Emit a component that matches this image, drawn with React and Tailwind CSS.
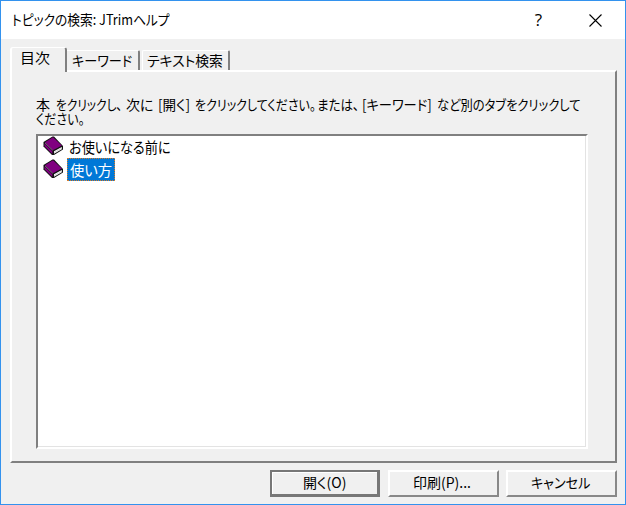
import React, { useLayoutEffect, useRef } from 'react';

// Condenses a run of text to the narrow width of a UI gothic face
const Narrow = ({ width, className = '', children }) => {
  const ref = useRef(null);

  useLayoutEffect(() => {
    const el = ref.current;
    const fit = () => {
      el.style.transform = `scaleX(${width / el.offsetWidth})`;
    };
    fit();
    document.fonts.ready.then(fit);
  }, [width]);

  return (
    <span className={`inline-block shrink-0 whitespace-nowrap ${className}`} style={{ width }}>
      <span ref={ref} className="inline-block origin-left [font-feature-settings:'palt']">
        {children}
      </span>
    </span>
  );
};

const BookIcon = () => (
  <svg width="21" height="20" viewBox="0 0 21 20" className="mb-[2px] shrink-0">
    <path d="M.5 6L9.5 .5L11 .5L20 10V13.5L11 19H9L.5 10.5Z" fill="#111" />
    <path d="M2 6.2L10 1.3L18.8 9.6L10 14.3Z" fill="#800080" />
    <path d="M1.5 7.6L9.3 15.2V18L1.5 10.2Z" fill="#800080" />
    <path d="M11 15.2L18.8 11V13.2L11 17.8Z" fill="#fff" />
    <path d="M11 16.6L18.8 12.2" stroke="#b5b5b5" strokeWidth=".6" />
    <path d="M2 6.9L9.8 14.4" stroke="#c9a0c9" strokeWidth=".6" />
  </svg>
);

const Button = ({ label, width, primary }) => (
  <button
    className={`flex h-[27px] items-center justify-center border-2 bg-[#f0f0f0] text-[14px] leading-none ${
      primary
        ? 'w-[110px] border-[#777] border-r-[3px] border-b-[3px] pb-[2px] shadow-[inset_1px_1px_0_#fff]'
        : 'w-[111px] border-t-white border-l-white border-r-[#888] border-b-[#888] pr-[3px] pb-[4px]'
    }`}
  >
    <Narrow width={width}>{label}</Narrow>
  </button>
);

const message = [
  ['本', 14, 'mr-[6px]'],
  ['をクリックし、', 66, 'mr-[4px]'],
  ['次に', 27, 'mr-[5px]'],
  ['[開く]', 32, 'mr-[5px]'],
  ['をクリックしてください。', 121, 'mr-[1px]'],
  ['または、', 42, 'mr-[3px]'],
  ['[キーワード]', 70, 'mr-[5px]'],
  ['など別のタブをクリックして', 144, ''],
];

const App = () => {
  return (
    <div className="flex h-[505px] w-[626px] flex-col border border-[#3392ee] bg-[#f0f0f0] font-['Noto_Sans_CJK_JP',sans-serif] text-[14px] leading-none text-black">
      <header className="flex h-[38px] shrink-0 items-center bg-white pl-[11px]">
        <Narrow width={158} className="pb-[2px] text-[14px]">トピックの検索: JTrimヘルプ</Narrow>
        <span className="ml-auto mr-[47px] pb-[2px] text-[17px] font-['Open_Sans',sans-serif]">?</span>
        <svg width="13" height="13" viewBox="0 0 13 13" className="mr-[23px]">
          <path d="M.5 .5L12.5 12.5M12.5 .5L.5 12.5" stroke="#000" strokeWidth="1.1" />
        </svg>
      </header>

      <nav className="flex h-[31px] shrink-0 items-end pl-[9px]">
        <div className="relative -mb-[2px] flex h-[25px] w-[57px] items-start rounded-t-[3px] border-t border-r-2 border-l-2 border-t-white border-l-white border-r-[#808080] bg-[#f0f0f0] pt-[2px] pl-[8px]">
          <Narrow width={30}>目次</Narrow>
        </div>
        <div className="flex h-[20px] w-[73px] items-center rounded-tr-[2px] border-t border-r-2 border-t-white border-r-[#808080] pb-px pl-[5px]">
          <Narrow width={60}>キーワード</Narrow>
        </div>
        <div className="ml-[2px] flex h-[20px] w-[88px] items-center rounded-t-[2px] border-t border-r-2 border-l border-t-white border-l-white border-r-[#808080] pb-px pl-[4px]">
          <Narrow width={76}>テキスト検索</Narrow>
        </div>
      </nav>

      <main className="ml-[9px] flex h-[393px] w-[607px] shrink-0 flex-col border-2 border-t-white border-l-white border-r-[#808080] border-b-[#808080] px-[24px] pt-[24px]">
        <div className="shrink-0 text-[14px]">
          <div className="flex h-[15px] items-center">
            {message.map(([text, width, gap]) => (
              <Narrow key={text} width={width} className={`h-[14px] ${gap}`}>{text}</Narrow>
            ))}
          </div>
          <div className="flex h-[14px] items-center">
            <Narrow width={49} className="h-[14px]">ください。</Narrow>
          </div>
        </div>

        <div className="mt-[9px] h-[315px] w-[552px] shrink-0 border-2 border-t-[#808080] border-l-[#808080] border-r-white border-b-white bg-white pl-[5px] shadow-[inset_-1px_-1px_0_#e3e3e3]">
          <div className="-mt-px flex h-[23px] items-center">
            <BookIcon />
            <Narrow width={102} className="ml-[5px] text-[15px]">お使いになる前に</Narrow>
          </div>
          <div className="flex h-[23px] items-center">
            <BookIcon />
            <span className="ml-[3px] flex h-[23px] w-[48px] items-center border border-dotted border-[#d77b28] bg-[#0078d7] pb-px pl-[2px] text-[15px] text-white">
              <Narrow width={42}>使い方</Narrow>
            </span>
          </div>
        </div>
      </main>

      <footer className="flex pt-[7px] pl-[269px]">
        <Button label="開く(O)" width={43} primary />
        <div className="ml-[8px] flex gap-[7px]">
          <Button label="印刷(P)..." width={58} />
          <Button label="キャンセル" width={59} />
        </div>
      </footer>
    </div>
  );
};

export default App;
